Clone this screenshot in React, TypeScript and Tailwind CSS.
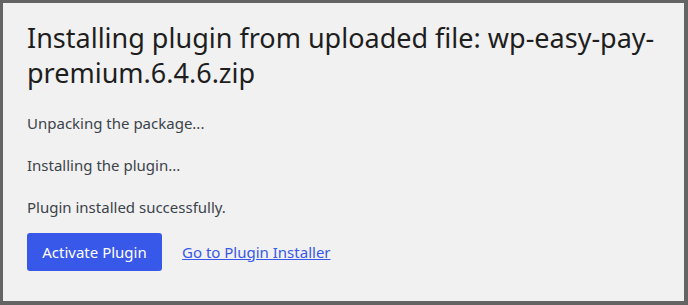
export default function App() {
  const steps = [
    "Unpacking the package...",
    "Installing the plugin...",
    "Plugin installed successfully.",
  ];

  return (
    <div
      className="h-[305px] w-[688px] border-t-[3px] border-l-[3px] border-r-4 border-b-4 border-[#646464] bg-[#f1f1f1] px-6 pt-[17px]"
      style={{ fontFamily: '"Noto Sans", "Open Sans", sans-serif' }}
    >
      <h1 className="text-[27px] leading-[35px] font-normal text-[#1e1e1e]">
        Installing plugin from uploaded file: wp-easy-pay-premium.6.4.6.zip
      </h1>

      <div className="mt-[23px] flex flex-col gap-[21px] text-[15px] leading-[21px] text-[#3c434a]">
        {steps.map((s) => (
          <p key={s}>{s}</p>
        ))}
      </div>

      <div className="mt-[15px] flex items-center gap-5">
        <button className="h-[38px] w-[135px] rounded-[3px] bg-[#3858e9] text-[15px] text-white">
          Activate Plugin
        </button>
        <a href="#" className="text-[15px] text-[#3858e9] underline">
          Go to Plugin Installer
        </a>
      </div>
    </div>
  );
}
